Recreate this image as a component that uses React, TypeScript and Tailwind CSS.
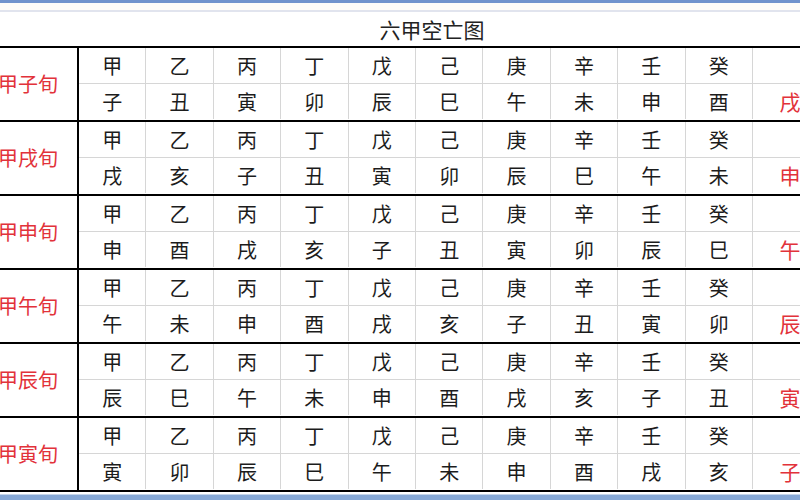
import React from 'react'

const stems = ['甲', '乙', '丙', '丁', '戊', '己', '庚', '辛', '壬', '癸']

const groups = [
  { name: '甲子旬', branches: ['子', '丑', '寅', '卯', '辰', '巳', '午', '未', '申', '酉'], empty: ['戌', '亥'] },
  { name: '甲戌旬', branches: ['戌', '亥', '子', '丑', '寅', '卯', '辰', '巳', '午', '未'], empty: ['申', '酉'] },
  { name: '甲申旬', branches: ['申', '酉', '戌', '亥', '子', '丑', '寅', '卯', '辰', '巳'], empty: ['午', '未'] },
  { name: '甲午旬', branches: ['午', '未', '申', '酉', '戌', '亥', '子', '丑', '寅', '卯'], empty: ['辰', '巳'] },
  { name: '甲辰旬', branches: ['辰', '巳', '午', '未', '申', '酉', '戌', '亥', '子', '丑'], empty: ['寅', '卯'] },
  { name: '甲寅旬', branches: ['寅', '卯', '辰', '巳', '午', '未', '申', '酉', '戌', '亥'], empty: ['子', '丑'] },
]

function Cell({ children }: { children: React.ReactNode }) {
  return (
    <div className="w-[67.4px] shrink-0 flex items-center justify-center border-r border-[#d6d6d6] text-[20px] text-[#1c1c1c]">
      {children}
    </div>
  )
}

function EmptyCell({ children }: { children: React.ReactNode }) {
  return (
    <div className="w-[67.4px] shrink-0 flex items-center justify-center pl-[8px] border-r border-[#d6d6d6] text-[21px] text-[#e2323a]">
      {children}
    </div>
  )
}

export default function App() {
  return (
    <div className="w-[800px] h-[500px] overflow-hidden bg-white font-['Noto_Sans_CJK_SC','Noto_Sans',sans-serif] leading-none">
      {/* window chrome lines */}
      <div className="h-[3px] bg-[#7094cc]" />
      <div className="h-[7px] bg-[#fdfdf8]" />
      <div className="h-[2px] bg-[#e1e4ee]" />

      <div className="ml-[-33px] w-[920px]">
        {/* title */}
        <div className="h-[34px] flex items-center justify-center text-[21px] text-[#222] pl-[10px]">
          六甲空亡图
        </div>

        {/* table */}
        <div className="border-b-2 border-black">
          {groups.map(g => (
            <div key={g.name} className="flex h-[74px] border-t-2 border-black">
              <div className="w-[112px] shrink-0 flex items-center justify-center border-r-2 border-black text-[20px] text-[#e2323a] pl-[12px]">
                {g.name}
              </div>
              <div className="flex flex-col">
                <div className="flex h-[36px] border-b border-[#d6d6d6]">
                  {stems.map(s => (
                    <Cell key={s}>{s}</Cell>
                  ))}
                  <div className="w-[134.8px] shrink-0 flex items-center justify-center text-[20px] text-[#cfcfcf] pr-[2px]">
                    空亡
                  </div>
                </div>
                <div className="flex h-[35px]">
                  {g.branches.map(b => (
                    <Cell key={b}>{b}</Cell>
                  ))}
                  {g.empty.map(e => (
                    <EmptyCell key={e}>{e}</EmptyCell>
                  ))}
                </div>
              </div>
            </div>
          ))}
        </div>
      </div>

      {/* bottom bar */}
      <div className="h-[2px] bg-white" />
      <div className="h-[7px] bg-[#86a8d6] border-t border-[#c4d5ea]" />
    </div>
  )
}
